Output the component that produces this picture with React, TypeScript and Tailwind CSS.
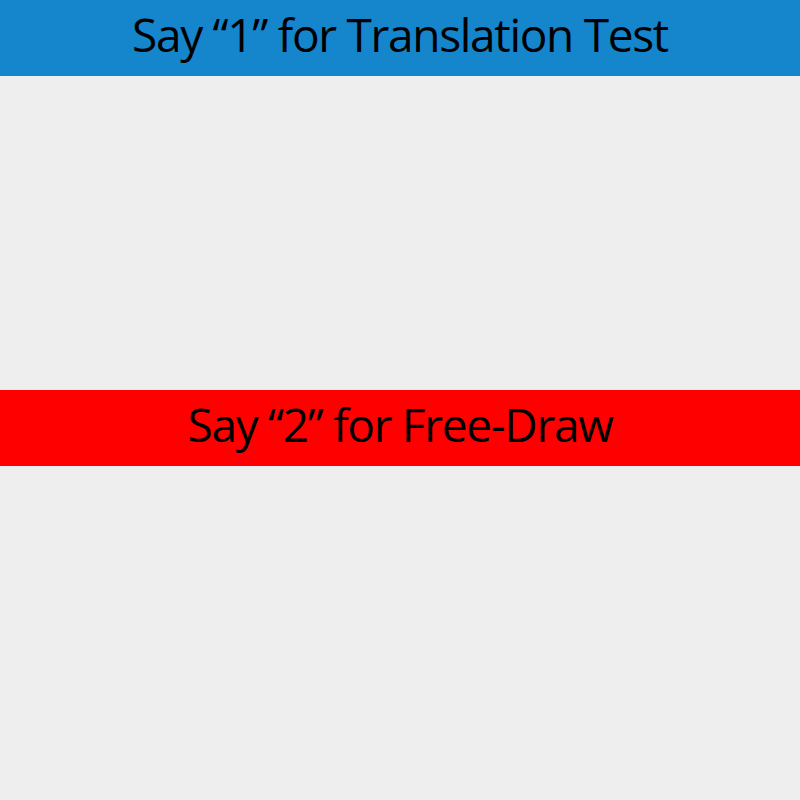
const App: React.FC = () => {
  return (
    <div className="flex h-[800px] w-[800px] flex-col bg-[#eeeeee] font-['Open_Sans',sans-serif] text-black">
      <div className="flex h-[76px] items-center justify-center bg-[#1585cc] pb-2">
        <h1 className="text-[46px] leading-none tracking-[-1.3px]">Say “1” for Translation Test</h1>
      </div>
      <div className="h-[314px]"></div>
      <div className="flex h-[76px] items-center justify-center bg-[#ff0000] pb-2">
        <h2 className="text-[46px] leading-none tracking-[-1.3px]">Say “2” for Free-Draw</h2>
      </div>
    </div>
  );
};

export default App;
